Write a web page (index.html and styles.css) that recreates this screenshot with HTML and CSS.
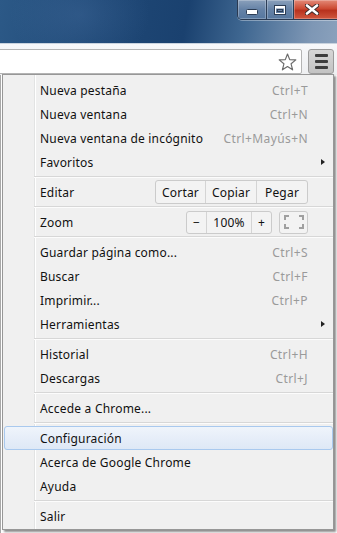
FILE: index.html
```html
<!DOCTYPE html>
<html>
<head>
<meta charset="utf-8">
<link rel="stylesheet" href="styles.css">
</head>
<body>
<div class="titlebar">
  <div class="caption">
    <div class="cbtn cmin">
      <svg width="12" height="6" viewBox="0 0 12 6"><rect x="0.5" y="0.5" width="11" height="5" rx="1" fill="#fff" stroke="#2c3d55"/></svg>
    </div>
    <div class="cbtn cmax">
      <svg width="12" height="10" viewBox="0 0 12 10"><rect x="0.5" y="0.5" width="11" height="9" fill="none" stroke="#2c3d55"/><rect x="1.5" y="1.5" width="9" height="7" fill="none" stroke="#fff"/><rect x="1.5" y="1.5" width="9" height="2" fill="#fff"/><rect x="3.5" y="4.5" width="5" height="2" fill="none" stroke="#2c3d55"/></svg>
    </div>
    <div class="cbtn cclose">
      <svg width="14" height="11" viewBox="0 0 14 11"><path d="M2 1.5 L12 9.5 M12 1.5 L2 9.5" stroke="#3a2a2a" stroke-width="4.4" stroke-linecap="round"/><path d="M2 1.5 L12 9.5 M12 1.5 L2 9.5" stroke="#fff" stroke-width="2.6" stroke-linecap="round"/></svg>
    </div>
  </div>
</div>
<div class="toolbar">
  <div class="omnibox">
    <svg class="star" width="19" height="18" viewBox="0 0 19 18"><path d="M9.5 1 L11.7 6.6 L17.8 6.9 L13.1 10.8 L14.6 16.8 L9.5 13.5 L4.4 16.8 L5.9 10.8 L1.2 6.9 L7.3 6.6 Z" fill="#fff" stroke="#6b6b6b" stroke-width="1.2" stroke-linejoin="round"/></svg>
  </div>
  <div class="menubtn">
    <span class="bar"></span><span class="bar"></span><span class="bar"></span>
  </div>
</div>
<div class="page"></div>

<div class="menu">
  <div class="item"><span class="label">Nueva pestaña</span><span class="key">Ctrl+T</span><span class="sub"></span></div>
  <div class="item"><span class="label">Nueva ventana</span><span class="key">Ctrl+N</span><span class="sub"></span></div>
  <div class="item"><span class="label">Nueva ventana de incógnito</span><span class="key">Ctrl+Mayús+N</span><span class="sub"></span></div>
  <div class="item"><span class="label">Favoritos</span><span class="sub"><span class="arrow"></span></span></div>
  <div class="sep"></div>
  <div class="item"><span class="label">Editar</span>
    <span class="group edit"><span class="seg">Cortar</span><span class="seg">Copiar</span><span class="seg">Pegar</span></span>
    <span class="sub"></span></div>
  <div class="sep"></div>
  <div class="item"><span class="label">Zoom</span>
    <span class="group zoom"><span class="seg zs">−</span><span class="seg zp">100%</span><span class="seg zs">+</span></span>
    <span class="group full"><svg width="20" height="14" viewBox="0 0 20 14"><path d="M1 5 V1 H5 M15 1 H19 V5 M19 9 V13 H15 M5 13 H1 V9" fill="none" stroke="#a0a0a0" stroke-width="2"/></svg></span>
    <span class="sub"></span></div>
  <div class="sep"></div>
  <div class="item"><span class="label">Guardar página como...</span><span class="key">Ctrl+S</span><span class="sub"></span></div>
  <div class="item"><span class="label">Buscar</span><span class="key">Ctrl+F</span><span class="sub"></span></div>
  <div class="item"><span class="label">Imprimir...</span><span class="key">Ctrl+P</span><span class="sub"></span></div>
  <div class="item"><span class="label">Herramientas</span><span class="sub"><span class="arrow"></span></span></div>
  <div class="sep"></div>
  <div class="item"><span class="label">Historial</span><span class="key">Ctrl+H</span><span class="sub"></span></div>
  <div class="item"><span class="label">Descargas</span><span class="key">Ctrl+J</span><span class="sub"></span></div>
  <div class="sep"></div>
  <div class="item"><span class="label">Accede a Chrome...</span><span class="sub"></span></div>
  <div class="sep"></div>
  <div class="item hot"><span class="label">Configuración</span><span class="sub"></span></div>
  <div class="item"><span class="label">Acerca de Google Chrome</span><span class="sub"></span></div>
  <div class="item"><span class="label">Ayuda</span><span class="sub"></span></div>
  <div class="sep"></div>
  <div class="item"><span class="label">Salir</span><span class="sub"></span></div>
</div>
</body>
</html>
```

FILE: styles.css
```css
html, body {
  margin: 0;
  padding: 0;
}
body {
  width: 337px;
  height: 533px;
  overflow: hidden;
  position: relative;
  background: #fff;
  font-family: "Noto Sans", "Open Sans", "Liberation Sans", sans-serif;
  font-size: 12px;
  color: #111;
}

/* title bar */
.titlebar {
  height: 43px;
  display: flex;
  justify-content: flex-end;
  align-items: flex-start;
  background:
    radial-gradient(ellipse 70px 50px at 80px 15px, rgba(70,110,160,0.35), transparent),
    linear-gradient(100deg, #2c5987 0%, #1f4876 30%, #1a416f 55%, #3f6791 72%, #7e97b5 92%, #8aa1bc 100%);
}
.caption {
  display: flex;
  height: 19px;
  margin-right: -6px;
  border: 1px solid #2a3a52;
  border-top: none;
  border-radius: 0 0 0 5px;
  overflow: hidden;
  box-shadow: 0 1px 0 rgba(255,255,255,0.35);
}
.cbtn {
  height: 19px;
  display: flex;
  align-items: center;
  justify-content: center;
  box-shadow: inset 0 0 0 1px rgba(255,255,255,0.25);
}
.cmin {
  width: 28px;
  background: linear-gradient(#8aa0bb, #6582a6 50%, #56779f);
  border-right: 1px solid #2d3e56;
}
.cmin svg { margin-top: 5px; }
.cmax {
  width: 26px;
  background: linear-gradient(#8aa0bb, #6582a6 50%, #56779f);
  border-right: 1px solid #2d3e56;
}
.cclose {
  width: 48px;
  justify-content: flex-start;
  padding-left: 11px;
  box-sizing: border-box;
  background: linear-gradient(#e38a78, #cc4a33 45%, #b8321e 55%, #d0573f);
}

/* toolbar */
.toolbar {
  height: 32px;
  box-sizing: border-box;
  padding-top: 5px;
  display: flex;
  gap: 6px;
  background: linear-gradient(#f7f8fa, #eeeff1);
  border-top: 1px solid #c9d3de;
}
.omnibox {
  width: 306px;
  height: 25px;
  margin-left: -4px;
  box-sizing: border-box;
  background: #fff;
  border: 1px solid #b4b4b4;
  border-radius: 2px;
  display: flex;
  align-items: center;
  justify-content: flex-end;
  padding-right: 4px;
}
.star { display: block; }
.menubtn {
  width: 26px;
  height: 25px;
  box-sizing: border-box;
  border: 1px solid #9b9b9b;
  border-radius: 3px;
  background: linear-gradient(#d6d6d6, #c3c3c3);
  display: flex;
  flex-direction: column;
  align-items: center;
  justify-content: center;
  gap: 3px;
}
.bar {
  width: 13px;
  height: 3px;
  border-radius: 1px;
  background: #3d3d3d;
}

.page {
  height: 458px;
  border-left: 1px solid #a8a8a8;
}

/* menu */
.menu {
  position: absolute;
  top: 74px;
  left: 2px;
  width: 330px;
  padding: 3px 0 1px;
  border: 1px solid #979797;
  background:
    linear-gradient(to right, transparent 31px, #e2e3e3 31px, #e2e3e3 32px, #ffffff 32px, #ffffff 33px, transparent 33px),
    #f0f0f0;
  box-shadow: 2px 2px 2px rgba(0,0,0,0.45);
}
.item {
  height: 24px;
  box-sizing: border-box;
  display: flex;
  align-items: center;
  padding: 0 8px 0 37px;
}
.label {
  flex: 1;
  white-space: nowrap;
  color: #111;
  letter-spacing: 0.2px;
}
.key {
  color: #9a9a9a;
  white-space: nowrap;
  letter-spacing: 0.4px;
}
.sub {
  width: 17px;
  height: 24px;
  display: flex;
  align-items: center;
  justify-content: flex-end;
}
.arrow {
  width: 0;
  height: 0;
  border-left: 4px solid #222;
  border-top: 3px solid transparent;
  border-bottom: 3px solid transparent;
}
.sep {
  margin: 2px 0 2px 31px;
  border-top: 1px solid #d7d7d7;
  border-bottom: 1px solid #fcfcfc;
}

.group {
  display: flex;
  border: 1px solid #cbcbcb;
  border-radius: 3px;
  background: #f3f3f3;
  box-sizing: border-box;
}
.seg {
  display: flex;
  align-items: center;
  justify-content: center;
  color: #111;
  letter-spacing: 0.2px;
}
.seg + .seg { border-left: 1px solid #d4d4d4; }
.edit { height: 24px; }
.edit .seg { width: 50px; }
.edit .seg:first-child { width: 49px; }
.zoom { height: 23px; }
.zoom .zs { width: 19px; }
.zoom .zp { width: 44px; }
.full {
  height: 23px;
  width: 29px;
  margin-left: 7px;
  align-items: center;
  justify-content: center;
}
.full svg { display: block; }

.hot {
  margin-left: 1px;
  padding-left: 35px;
  border: 1px solid #a9c9ee;
  border-radius: 3px;
  background: linear-gradient(#eff4fb, #dee8f6);
  padding-right: 7px;
}
```
